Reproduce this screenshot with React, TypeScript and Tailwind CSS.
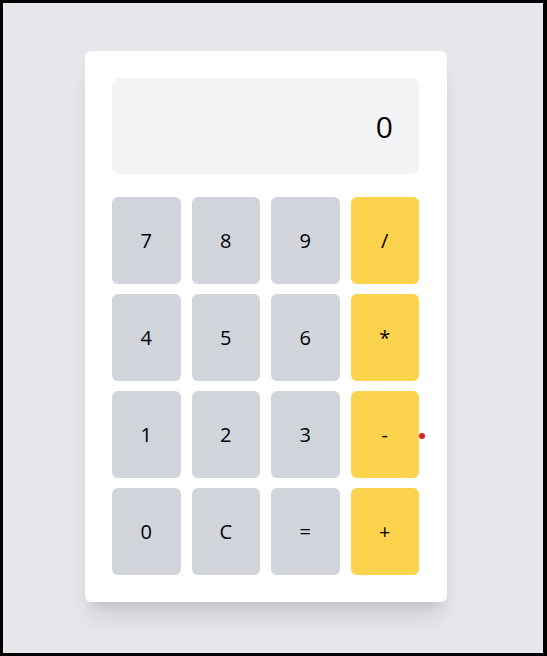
import React, { useState } from 'react';

// Touches de la calculatrice, ligne par ligne
const keys: { label: string; op?: boolean }[] = [
  { label: '7' }, { label: '8' }, { label: '9' }, { label: '/', op: true },
  { label: '4' }, { label: '5' }, { label: '6' }, { label: '*', op: true },
  { label: '1' }, { label: '2' }, { label: '3' }, { label: '-', op: true },
  { label: '0' }, { label: 'C' }, { label: '=' }, { label: '+', op: true },
];

export default function App() {
  const [display, setDisplay] = useState('0');

  const handleKey = (label: string) => {
    if (label === 'C') {
      setDisplay('0');
      return;
    }
    if (label === '=') {
      try {
        // eslint-disable-next-line no-new-func
        const result = Function(`return (${display})`)();
        setDisplay(String(result));
      } catch {
        setDisplay('Error');
      }
      return;
    }
    setDisplay((prev) => (prev === '0' || prev === 'Error' ? label : prev + label));
  };

  return (
    <div
      className="w-[547px] h-[656px] border-black border-t-[3px] border-l-[3px] border-r-[4px] border-b-[3px] bg-[#e5e7eb] pl-[82px] pt-[48px]"
      style={{ fontFamily: '"Open Sans", "Noto Sans", sans-serif' }}
    >
      <div className="relative w-[362px] bg-white rounded-md shadow-xl p-[27px] pr-[28px]">
        <div className="h-[96px] bg-[#f3f4f6] rounded-lg flex items-center justify-end pr-[26px] text-[30px] text-black">
          {display}
        </div>

        <div className="mt-[23px] grid grid-cols-4 gap-x-[11px] gap-y-[10px]">
          {keys.map((key) => (
            <button
              key={key.label}
              onClick={() => handleKey(key.label)}
              className={`h-[87px] rounded-md flex items-center justify-center text-[20px] text-black ${
                key.op ? 'bg-[#fcd34d]' : 'bg-[#d1d5db]'
              }`}
            >
              {key.label}
            </button>
          ))}
        </div>

        <span className="absolute left-[334px] top-[382px] w-[6px] h-[6px] rounded-full bg-[#e11d2a]" />
      </div>
    </div>
  );
}
